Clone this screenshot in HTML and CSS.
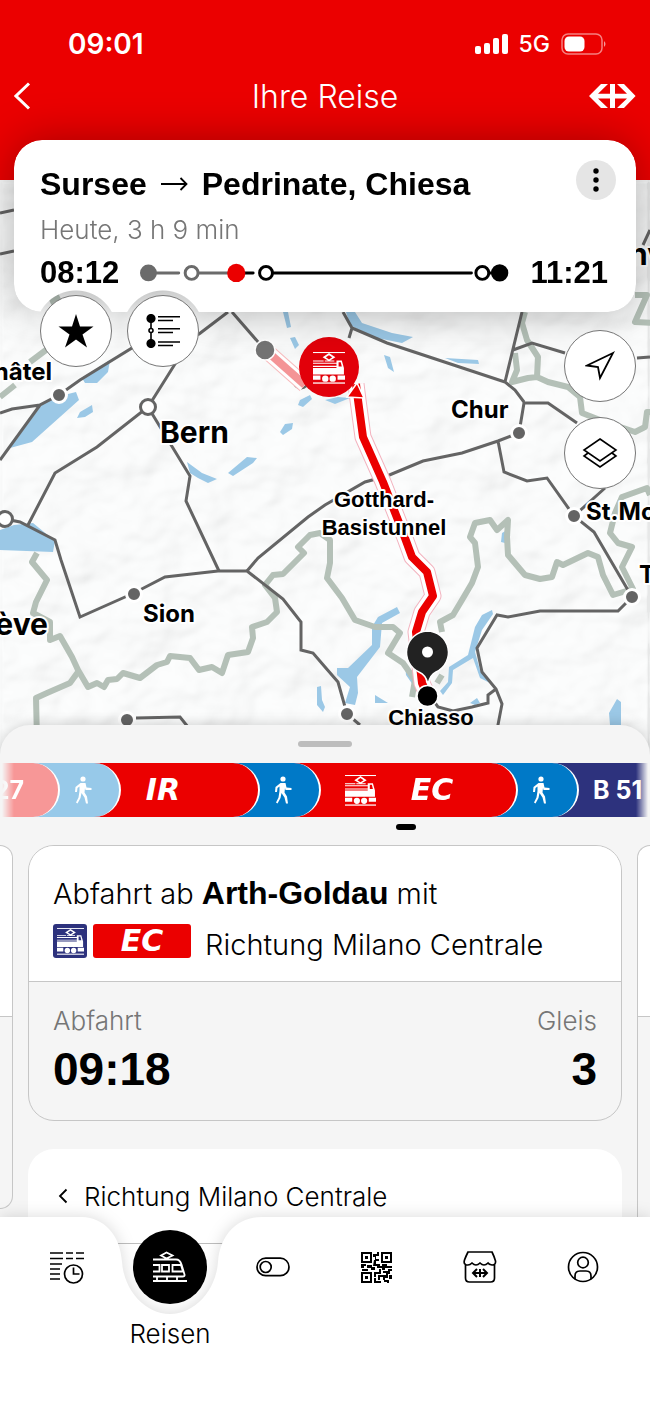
FILE: index.html
```html
<!DOCTYPE html>
<html lang="de">
<head>
<meta charset="utf-8">
<meta name="viewport" content="width=device-width, initial-scale=1">
<title>Ihre Reise</title>
<link rel="stylesheet" href="styles.css">
</head>
<body>
<svg class="sprite" width="0" height="0" aria-hidden="true">
  <symbol id="loco" viewBox="0 0 30 30">
    <g fill="currentColor">
      <rect x="0" y="0" width="30" height="1"/>
      <path d="M9 5 15 1l6 4-5 3h4v1h-9V8h3zM12 5l3 2 3-2-3-2z"/>
      <path d="M0 8h10v1H0zM0 10h22v1H0zM0 13h22v1H0zM22 8h5l2 7v6H0v-6h22zM24 9.500v4h3l-1-4z" fill-rule="evenodd"/>
      <path d="M0 22h7v4H0zM23 22h7v4h-7z"/>
      <circle cx="11.500" cy="25" r="3"/><circle cx="18.500" cy="25" r="3"/>
      <rect x="0" y="28.500" width="30" height="1.200"/>
    </g>
  </symbol>
  <symbol id="walk" viewBox="0 0 18 28">
    <circle cx="9" cy="3" r="2.600" fill="currentColor"/>
    <path d="M6.500 7h5l1 4.500 5 .5v2h-6l-.5-2-.5 4.500 2.500 4 1 7h-2l-1.500-6-3-4.500-1 5L3.500 27.500 2 26.500l2.500-5L5.500 15V10.500L3.500 12l-.5 4H1l.5-5z" fill="currentColor"/>
  </symbol>
</svg>

<div class="app">
  <header class="top">
    <div class="status">
      <span class="clock">09:01</span>
      <span class="signals">
        <svg width="33" height="20" viewBox="0 0 33 20" fill="#fff" aria-hidden="true"><rect y="12" width="6" height="8" rx="2"/><rect x="9" y="9" width="6" height="11" rx="2"/><rect x="18" y="4" width="6" height="16" rx="2"/><rect x="27" width="6" height="20" rx="2"/></svg>
        <span class="net">5G</span>
        <svg width="45" height="22" viewBox="0 0 45 22" aria-hidden="true"><rect x="1" y="1" width="40" height="20" rx="6" fill="none" stroke="#fff" stroke-opacity=".5" stroke-width="1.500"/><rect x="3.500" y="3.500" width="20" height="15" rx="4.500" fill="#fff"/><path d="M43 8q3 3 0 6z" fill="#fff" fill-opacity=".6"/></svg>
      </span>
    </div>
    <div class="titlebar">
      <button class="icon-btn back" aria-label="Zurück"><svg width="18" height="28" viewBox="0 0 18 28" fill="none" stroke="#fff" stroke-width="3"><path d="M15 1.500 2 14 15 26.500"/></svg></button>
      <h1>Ihre Reise</h1>
      <a class="logo" href="#" aria-label="SBB"><svg width="47" height="24" viewBox="0 0 47 24" fill="#fff"><path d="M12 0h7L9 9.700h12V0h5v9.700h12L28 0h7l11.600 12L35 24h-7l10-9.500H26V24h-5v-9.500H9L19 24h-7L0 12z"/></svg></a>
    </div>
  </header>

  <main>
  <section class="stage">
    <svg class="map" viewBox="0 180 650 600" preserveAspectRatio="xMidYMin slice" role="img" aria-label="Karte">
      <defs>
        <filter id="relief" x="0" y="0" width="100%" height="100%">
          <feTurbulence type="fractalNoise" baseFrequency=".018 .025" numOctaves="3" seed="8"/>
          <feColorMatrix values="0 0 0 0 0  0 0 0 0 0  0 0 0 0 0  1 0 0 0 0"/>
          <feGaussianBlur stdDeviation="1.500"/>
          <feDiffuseLighting surfaceScale="18" lighting-color="#fff"><feDistantLight azimuth="225" elevation="55"/></feDiffuseLighting>
        </filter>
      </defs>
      <rect y="180" width="650" height="600" fill="#fcfdfd"/>
      <rect y="180" width="650" height="600" filter="url(#relief)" opacity=".08"/>
      <g class="lakes">
        <path d="M10 448 43 403 60 396 76 392 79 400 32 442zM82 378 110 360 108 372 97 383 85 383zM77 418 80 412 92 405 93 412 85 417zM0 530 14 525 33 523 55 541 53 552 0 550zM187 462 202 473 217 479 208 483 198 478 190 473zM228 473 247 457 257 458 253 463 233 476zM280 432 285 424 293 423 292 429 283 435zM298 405 300 400 310 395 312 399 303 407zM283 312h5l3 15-4 1zM290 338l5-1 4 8-4 4z"/>
        <path d="M346 312h9l7 11 30 10 21 4-11 6-30-6-22-12zM445 358l33 2 1 4-21-1zM384 355l6 2 4 15-6-4zM325 400l13-3 12 1-15 6zM502 533l5-3-2 13-4-1z"/>
        <path d="M378 617 397 607 400 613 382 623 380 647 357 677 358 693 355 705 345 703 350 687 337 675V668H348L372 645V627zM317 687l4-1 1 14 3 7-2 5-6-7zM375 695l13 8h-13zM405 663l7 10 1 12-7-10zM475 627 482 615 492 610 493 614 482 630 475 652 480 670 490 683 480 678 473 658 453 670 452 683 443 695 440 691 448 682 449 667 468 655zM470 703l7-5 3 5-5 2zM609 713 617 699 621 702V725H610z"/>
      </g>
      <g class="border-lines">
        <path d="M37 553 32 562 47 580 36 602 33 613 50 622 50 640 60 636 72 657 78 670 88 687 97 683 104 687 108 680 117 679 123 673 140 678 157 665 167 662 170 656 190 658 199 670 212 667 222 673 228 655 248 652 253 638 252 627 267 622 277 612 275 598 265 585 273 575 283 574 295 562 304 553 298 547 310 535 320 533 330 540V563L327 578 342 598 355 620 375 627H393L400 633 388 653 403 663 415 680 412 697"/>
        <path d="M78 672 70 683 47 693 36 698 37 740M442 675 437 683M442 632 440 622 453 615 462 600 472 583 478 567 475 543 470 537 475 523 490 520 497 530 508 520 507 537 508 555 525 575 540 579 552 577 557 562 563 565 588 553 598 557 603 575 613 595 633 589 622 567 632 547 618 543 610 533 615 513 622 497 647 488 650 495"/>
        <path d="M525 312 522 323 527 340 538 357 537 377M515 353 517 370 512 382 528 378 537 377 548 382 568 387 580 397 582 413 600 420 635 432 645 427 647 412 653 412M635 295H647L635 322 653 323M60 297 50 302M30 362 50 347M0 397 15 385"/>
      </g>
      <g class="rails">
        <path d="M0 213 14 210M0 254 14 251M228 312 199 334 132 348 80 380 59 395 40 405 0 460M40 405 12 409 0 413M232 312 265 350M190 340 165 380 148 407 97 447 55 473 28 525M5 519 20 522 55 540 61 560 80 617 134 593 165 577 218 571 247 571 283 599 301 622V650L313 653 325 667 338 682 347 714 360 725"/>
        <path d="M148 407 190 476 186 501 219 571M247 571 258 558 308 517 325 505 365 482 387 476 423 461 462 453 498 441 519 433M498 441 504 472 527 481 547 478 574 516 594 532 632 597M574 516 605 488M519 433 524 403H548L577 423M522 312 505 382 515 390 524 402M513 350 532 343 565 353M637 358 650 357M343 312 352 328 387 343 505 382M352 328 349 338M643 245 650 230"/>
        <path d="M632 597 618 611H540L508 617 497 615 477 648 482 672 496 689 502 704 497 730M496 689 488 695V703L472 707 453 711 438 707 430 696M136 718 180 717 192 732"/>
      </g>
      <g class="stations">
        <circle cx="59" cy="395" r="7.500"/><circle cx="134" cy="594" r="7.500"/><circle cx="519" cy="433" r="7.500"/><circle cx="574" cy="516" r="7.500"/><circle cx="632" cy="597" r="7.500"/><circle cx="127" cy="720" r="7.500"/><circle cx="347" cy="714" r="7.500"/>
      </g>
      <g class="hubs"><circle cx="148" cy="407" r="7.500"/><circle cx="5" cy="519" r="7.500"/><circle cx="301" cy="381" r="7"/></g>
      <path d="M270 354 305 385" stroke="#f8b9bb" stroke-width="16"/>
      <path d="M270 354 305 385" stroke="#fff" stroke-width="14"/>
      <path d="M270 354 305 385" stroke="#f49496" stroke-width="8"/>
      <circle cx="265" cy="350" r="10" fill="#747474" stroke="#fff" stroke-width="1.500"/>
      <g fill="none" stroke-linejoin="round">
        <path d="M356 384 358 400 363 437 383 482 405 538 412 557 427 572 433 596 422 612 416 632 422 683 428 696" stroke="#f3b3bf" stroke-width="17"/>
        <path d="M356 384 358 400 363 437 383 482 405 538 412 557 427 572 433 596 422 612 416 632 422 683 428 696" stroke="#fff" stroke-width="15"/>
        <path d="M356 384 358 400 363 437 383 482 405 538 412 557 427 572 433 596 422 612 416 632 422 683 428 696" stroke="#eb0000" stroke-width="8"/>
      </g>
      <path d="M347 397 357 383 364 398z" fill="#eb0000" stroke="#fff" stroke-width="1.500"/>
      <circle cx="329" cy="367" r="30" fill="#e2000a"/>
      <svg x="313" y="352" width="32" height="32" color="#fff"><use href="#loco"/></svg>
      <path d="M427 631a21.500 21.500 0 0 1 9 41q-6 3-8 12-2-9-9-12a21.500 21.500 0 0 1 8-41z" fill="#222" stroke="#fff" stroke-width="1.500"/>
      <circle cx="427.500" cy="652" r="5.500" fill="#fff"/>
      <circle cx="427.500" cy="696" r="10.500" stroke="#fff" stroke-width="1.500"/>
      <g class="labels">
        <text x="52" y="380" class="town" text-anchor="end">Neuchâtel</text>
        <text x="160" y="443" class="city">Bern</text>
        <text x="451" y="418" class="town">Chur</text>
        <text x="143" y="622" class="town">Sion</text>
        <text x="48" y="635" class="city" text-anchor="end">Genève</text>
        <text x="586" y="520" class="town">St.Moritz</text>
        <text x="639" y="583" class="town">Tirano</text>
        <text x="629" y="265" class="city">nv</text>
        <text x="384" y="507" class="stop" text-anchor="middle">Gotthard-</text>
        <text x="384" y="535" class="stop" text-anchor="middle">Basistunnel</text>
        <text x="431" y="725" class="stop" text-anchor="middle">Chiasso</text>
      </g>
    </svg>

    <div class="trip-shadow">
      <article class="trip">
        <div class="trip-head">
          <h2>Sursee <svg width="27" height="14" viewBox="0 0 27 14" fill="none" stroke="#000" stroke-width="1.800" role="img" aria-label="nach"><path d="M0 7h25M19.500 1l6 6-6 6"/></svg> Pedrinate, Chiesa</h2>
          <button class="more" aria-label="Mehr"><svg width="6" height="24" viewBox="0 0 6 24"><circle cx="3" cy="3" r="2.700"/><circle cx="3" cy="12" r="2.700"/><circle cx="3" cy="21" r="2.700"/></svg></button>
        </div>
        <p class="when">Heute, 3 h 9 min</p>
        <div class="times">
          <b>08:12</b>
          <svg class="track" viewBox="0 0 372 20" fill="none" stroke-width="3" stroke-linecap="round" aria-hidden="true">
            <path d="M10 10h29M59 10h30" stroke="#6b6b6b"/><path d="M104 10h10M134 10h200M352 10h6" stroke="#000"/>
            <circle cx="8.500" cy="10" r="8.500" fill="#6b6b6b"/><circle cx="52" cy="10" r="6.500" stroke="#6b6b6b" fill="#fff"/><circle cx="97" cy="10" r="9.200" fill="#eb0000"/><circle cx="127" cy="10" r="6.500" stroke="#000" fill="#fff"/><circle cx="345" cy="10" r="6.500" stroke="#000" fill="#fff"/><circle cx="362.500" cy="10" r="8.700" fill="#000"/>
          </svg>
          <b>11:21</b>
        </div>
      </article>
    </div>

    <div class="controls">
      <div class="controls-left">
        <button class="round" aria-label="Merken"><svg width="36" height="34" viewBox="0 0 36 34"><path d="M18 0l4 12.500h13.500L24.500 20.500 29 33.500 18 25.500 7 33.500l4.500-13L.5 12.500H14z"/></svg></button>
        <button class="round" aria-label="Zwischenhalte"><svg width="34" height="34" viewBox="0 0 34 34" fill="none" stroke="#000" stroke-width="1.600"><circle cx="5" cy="4.500" r="3.800" fill="#000"/><circle cx="5" cy="29.500" r="3.800" fill="#000"/><path d="M5 5v9M5 19v9M12 2.800h22M12 6.500h15M12 14.800h22M12 18.500h15M12 28h22M12 31.500h15"/><circle cx="5" cy="16.500" r="2"/></svg></button>
      </div>
      <div class="controls-right">
        <button class="round" aria-label="Standort"><svg width="30" height="30" viewBox="0 0 30 30" fill="none" stroke="#000" stroke-width="1.800"><path d="M28 2 2 14.500 13 16 15 27z"/></svg></button>
        <button class="round" aria-label="Ebenen"><svg width="36" height="32" viewBox="0 0 36 32" fill="none" stroke="#000" stroke-width="1.600"><path d="M18 2 34 13 18 24 2 13zM6 16 2 19l16 11 16-11-4-3"/></svg></button>
      </div>
    </div>
  </section>

  <section class="sheet">
    <div class="handle"></div>
    <div class="strip">
      <span class="leg red faded first">27</span>
      <span class="leg walk blue faded"><svg width="18" height="28"><use href="#walk"/></svg></span>
      <span class="leg red ir"><i class="mark">IR</i></span>
      <span class="leg walk blue"><svg width="18" height="28"><use href="#walk"/></svg></span>
      <span class="leg red ec"><svg width="31" height="31"><use href="#loco"/></svg><i class="mark">EC</i></span>
      <span class="leg walk blue"><svg width="18" height="28"><use href="#walk"/></svg></span>
      <span class="leg navy">B&nbsp;51</span>
    </div>

    <div class="carousel">
      <div class="peek prev"></div>
      <div class="stack">
        <article class="departure">
          <div class="dep-top">
            <p>Abfahrt ab <b>Arth-Goldau</b> mit</p>
            <div class="line"><span class="badge train"><svg width="27" height="27"><use href="#loco"/></svg></span><span class="badge product"><i class="mark">EC</i></span><span>Richtung Milano Centrale</span></div>
          </div>
          <dl class="dep-info">
            <div><dt>Abfahrt</dt><dd>09:18</dd></div>
            <div class="platform"><dt>Gleis</dt><dd>3</dd></div>
          </dl>
        </article>
        <article class="direction">
          <button class="dir-head"><svg width="10" height="16" viewBox="0 0 10 16" fill="none" stroke="#000" stroke-width="1.800"><path d="M8.500 1.500 2 8l6.500 6.500"/></svg>Richtung Milano Centrale</button>
        </article>
      </div>
      <div class="peek next"></div>
    </div>
  </section>
  </main>

  <nav class="tabs" aria-label="Hauptnavigation">
    <svg class="tabs-bg" viewBox="0 0 650 190" preserveAspectRatio="none" aria-hidden="true"><path d="M0 0H82C104 1 120 17 122 45 124 74 146 97 170 97S216 74 218 45C220 17 238 0 262 0H650V190H0z" fill="#fff"/></svg>
    <a href="#" aria-label="Fahrplan"><svg width="36" height="36" viewBox="0 0 36 36" fill="none" stroke="#000" stroke-width="1.700"><path d="M1 4h13M17 4h7M27 4h8M1 9.500h13M17 9.500h7M27 9.500h8M1 15h12M1 20h10M1 25h10M1 30h10"/><circle cx="24.500" cy="25" r="9"/><path d="M24.500 18.500V25h6"/></svg></a>
    <a href="#" class="active" aria-current="page"><span class="disc"><svg width="34" height="32" viewBox="0 0 34 32" fill="none" stroke="#fff" stroke-width="1.800"><path d="M8 4.500 13.500 1.500l6 3-6 3zM0 8.500h23q4 0 5.500 5l3 10q.5 2-2 2H0M0 14h6.500v6.500H0M9 14h7v6.500H9zM19.500 14H28l2 6.500h-10.500zM0 30h34M4 26v3M14 26v3M24 26v3"/></svg></span><span>Reisen</span></a>
    <a href="#" aria-label="EasyRide"><svg width="34" height="20" viewBox="0 0 34 20" fill="none" stroke="#000" stroke-width="1.700"><rect x="1" y="1.200" width="32" height="17.500" rx="8.750"/><circle cx="9.700" cy="10" r="5.500"/></svg></a>
    <a href="#" aria-label="Billette"><svg width="31" height="31" viewBox="0 0 31 31"><path fill-rule="evenodd" d="M0 0h11v11H0zM2 2v7h7V2zM4 4h3v3H4zM20 0h11v11H20zM22 2v7h7V2zM24 4h3v3h-3zM0 20h11v11H0zM2 22v7h7v-7zM4 24h3v3H4z"/><path d="M16 0h2v4h-3V7h3v2h-4V5h-2V2h4zM13 8h2v4h4v2h-7zM0 12h5v2H3v2H0zM6 13h5v2h3v3h-4v-2H6zM1 17h6v2H1zM16 14h5v-2h5v2h5v2h-7v2h-3v-2h-5zM13 20h5v-3h2v5h-5v3h-2zM22 19h5v-2h4v2h-2v3h-2v-1h-5zM13 26h2v3h5v2h-7zM17 23h5v2h-3v3h-2zM22 23h3v-2h2v5h-3v2h-2zM28 23h3v4h-3zM23 28h5v3h-2v-1h-3z"/></svg></a>
    <a href="#" aria-label="Shop"><svg width="34" height="32" viewBox="0 0 34 32" fill="none" stroke="#000" stroke-width="1.700"><path d="M5 1h24q2 4 3.500 9 .5 4-3.500 4-3-.5-4-2-2 2-4 2t-4-2q-2 2-4 2t-4-2q-2 2-4 2-5 0-3.500-5Q3 5 5 1zM2.500 13v14q0 4 4 4h21q4 0 4-4V13"/><path stroke-width="2" d="M14 18l-4 4 4 4M20 18l4 4-4 4M11 22h12M17 18v8"/></svg></a>
    <a href="#" aria-label="Profil"><svg width="32" height="32" viewBox="0 0 32 32" fill="none" stroke="#000" stroke-width="1.700"><circle cx="16" cy="16" r="14.500"/><circle cx="16" cy="11.500" r="5.300"/><path d="M8 28v-3q0-5 5-5h6q5 0 5 5v3"/></svg></a>
  </nav>
</div>
</body>
</html>
```
FILE: styles.css
```css
* { box-sizing: border-box; margin: 0; padding: 0; }
body { font-family: Inter, "Liberation Sans", sans-serif; font-weight: 300; color: #000; background: #fff; }
button { font: inherit; color: inherit; border: 0; background: none; cursor: pointer; }
a { color: inherit; text-decoration: none; }
b { font-family: "Liberation Sans", sans-serif; font-weight: 700; }
svg { display: block; }
.sprite { position: absolute; }
.app { min-height: 100vh; overflow: hidden; }

.top { background: #eb0000; color: #fff; padding: 28px 14px 48px; }
.status { display: flex; justify-content: space-between; align-items: center; height: 32px; padding: 0 30px 0 54px; }
.clock { font-size: 28px; font-weight: 600; }
.signals { display: flex; align-items: center; gap: 11px; }
.net { font-size: 23px; font-weight: 500; line-height: 28px; }
.titlebar { display: grid; grid-template-columns: 60px 1fr 60px; align-items: center; height: 72px; }
.titlebar h1 { font-size: 32px; font-weight: 300; text-align: center; }
.back { justify-self: start; }
.logo { justify-self: end; }

.stage { position: relative; display: flex; flex-direction: column; min-height: 600px; }
.map { position: absolute; inset: 0; width: 100%; height: 100%; }
.lakes { fill: #9bc8e6; }
.border-lines { fill: none; stroke: #b4c0b7; stroke-width: 6; stroke-linejoin: round; }
.rails { fill: none; stroke: #646464; stroke-width: 3; }
.stations { fill: #646464; stroke: #fff; stroke-width: 3; }
.hubs { fill: #fff; stroke: #646464; stroke-width: 3; }
.labels text { font-weight: 700; stroke: #fff; stroke-width: 4px; paint-order: stroke; stroke-linejoin: round; }
.city { font-size: 30px; }
.town { font-size: 24px; }
.stop { font-family: "Liberation Sans", sans-serif; font-size: 22px; }

.trip-shadow { position: relative; margin: -40px 14px 0; filter: drop-shadow(0 0 22px rgba(0, 0, 0, .3)); }
.trip {
  background: #fff; border-radius: 28px; padding: 20px 20px 20px 26px; height: 172px;
  -webkit-mask: radial-gradient(circle at 62px 191px, transparent 40px, #000 41px), radial-gradient(circle at 149px 191px, transparent 40px, #000 41px);
  -webkit-mask-composite: source-in;
  mask-composite: intersect;
}
.trip-head { display: flex; justify-content: space-between; align-items: flex-start; height: 48px; }
.trip h2 { display: flex; align-items: center; gap: 14px; font-size: 32px; line-height: 48px; font-weight: 700; font-family: "Liberation Sans", sans-serif; white-space: nowrap; }
.more { display: grid; place-items: center; width: 40px; height: 40px; border-radius: 50%; background: #e5e5e5; }
.when { font-size: 26px; line-height: 44px; color: #767676; }
.times { display: flex; align-items: center; gap: 21px; padding-right: 8px; line-height: 42px; }
.times b { font-size: 31px; }
.track { flex: 1; min-width: 0; }

.controls { position: relative; display: flex; justify-content: space-between; padding: 0 14px 0 40px; margin-top: -17px; }
.controls-left { display: flex; gap: 15px; }
.controls-right { display: grid; gap: 15px; padding-top: 35px; }
.round { display: grid; place-items: center; width: 72px; height: 72px; border-radius: 50%; border: 1px solid #767676; background: #fff; }

.sheet { position: relative; margin-top: -55px; background: #f5f5f5; border-radius: 30px 30px 0 0; box-shadow: 0 0 14px rgba(0, 0, 0, .2); padding-top: 16px; }
.handle { width: 54px; height: 6px; border-radius: 3px; background: #bdbdbd; margin: 0 auto 16px; }
.strip {
  display: flex; overflow: hidden; padding-bottom: 28px;
  -webkit-mask: linear-gradient(90deg, transparent 2px, #000 14px, #000 calc(100% - 14px), transparent calc(100% - 2px));
}
.leg { position: relative; display: flex; flex: none; align-items: center; justify-content: center; height: 54px; margin-left: -27px; border-right: 2px solid #fff; border-radius: 0 27px 27px 0; color: #fff; font-size: 25px; font-weight: 700; }
.leg:nth-child(1) { z-index: 7; }
.leg:nth-child(2) { z-index: 6; }
.leg:nth-child(3) { z-index: 5; }
.leg:nth-child(4) { z-index: 4; }
.leg:nth-child(5) { z-index: 3; }
.leg:nth-child(6) { z-index: 2; }
.first { width: 60px; margin-left: 0; justify-content: flex-end; padding-right: 34px; }
.walk { width: 88px; padding-left: 14px; }
.ir { width: 166px; padding-right: 26px; }
.ec { width: 224px; gap: 22px; justify-content: flex-start; padding-left: 51px; }
.ec .mark { width: 68px; text-align: center; }
.ec::after { content: ""; position: absolute; left: 50%; bottom: -13px; width: 20px; height: 6px; margin-left: -9px; border-radius: 3px; background: #000; }
.red { background: #eb0000; }
.blue { background: #0079c7; }
.navy { background: #2d327d; flex: 1 0 99px; border: 0; border-radius: 0; justify-content: flex-start; padding-left: 41px; }
.red.faded { background: #f79797; }
.blue.faded { background: #97c9e9; }
.mark { font-family: "DejaVu Sans", sans-serif; font-weight: 700; font-style: italic; font-size: 30px; line-height: 32px; }

.carousel { display: grid; grid-template-columns: 13px minmax(0, 1fr) 13px; gap: 15px; }
.peek { border: 1px solid #c6c6c6; height: 364px; background: linear-gradient(#fff 170px, #c6c6c6 170px, #c6c6c6 171px, #f5f5f5 171px); }
.prev { border-left: 0; border-radius: 0 24px 24px 0; }
.next { border-right: 0; border-bottom: 0; border-radius: 24px 0 0 0; height: 480px; }
.stack { display: grid; gap: 28px; align-content: start; }
.departure { border: 1px solid #c6c6c6; border-radius: 26px; overflow: hidden; }
.dep-top { background: #fff; padding: 24px 24px 12px; font-size: 29px; line-height: 48px; border-bottom: 1px solid #c6c6c6; }
.dep-top p, .line { white-space: nowrap; }
.dep-top b { font-size: 32px; line-height: 40px; }
.line { display: flex; align-items: center; margin-top: 3px; }
.badge { display: grid; place-items: center; height: 34px; border-radius: 3px; color: #fff; margin-top: -8px; }
.train { width: 34px; background: #2d327d; margin-right: 6px; }
.product { width: 98px; background: #eb0000; margin-right: 14px; }
.dep-info { display: flex; justify-content: space-between; padding: 20px 24px 22px; }
.platform { text-align: right; }
.dep-info dt { font-size: 26px; line-height: 38px; color: #767676; }
.dep-info dd { font-family: "Liberation Sans", sans-serif; font-size: 46px; line-height: 58px; font-weight: 700; }
.direction { background: #fff; border-radius: 26px; height: 204px; }
.dir-head { display: flex; align-items: center; gap: 16px; width: 100%; height: 95px; padding: 0 30px; font-size: 26px; border-bottom: 1px solid #bdbdbd; }

.tabs { position: relative; z-index: 10; display: grid; grid-template-columns: repeat(6, 1fr); height: 190px; margin-top: -136px; padding: 0 15px; }
.tabs-bg { position: absolute; inset: 0; width: 100%; height: 100%; overflow: visible; filter: drop-shadow(0 0 8px rgba(0, 0, 0, .15)); }
.tabs a { position: relative; display: flex; flex-direction: column; align-items: center; justify-content: center; height: 100px; }
.tabs .active { justify-content: flex-start; padding-top: 13px; gap: 12px; font-size: 26px; line-height: 36px; }
.disc { display: grid; place-items: center; flex: none; width: 74px; height: 74px; border-radius: 50%; background: #000; }
```
